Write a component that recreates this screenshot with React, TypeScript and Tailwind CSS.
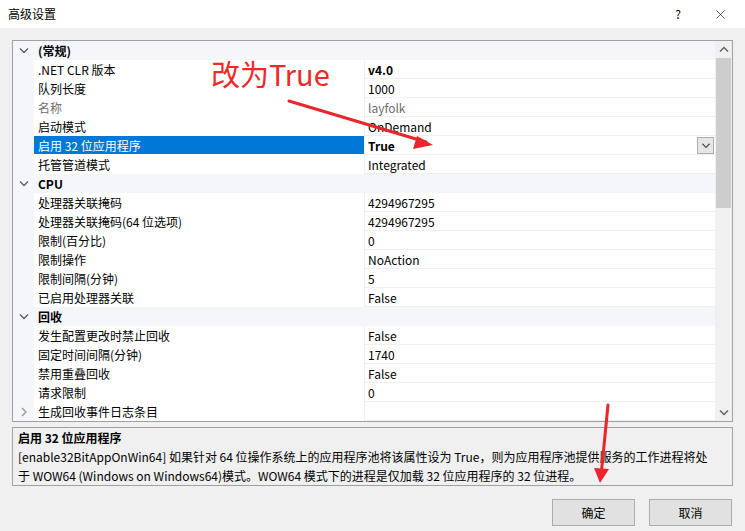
import { X } from 'lucide-react';

type Row =
  | { kind: 'cat'; label: string }
  | { kind: 'prop'; label: string; value: string; bold?: boolean; muted?: boolean; selected?: boolean; collapsed?: boolean };

const rows: Row[] = [
  { kind: 'cat', label: '(常规)' },
  { kind: 'prop', label: '.NET CLR 版本', value: 'v4.0', bold: true },
  { kind: 'prop', label: '队列长度', value: '1000' },
  { kind: 'prop', label: '名称', value: 'layfolk', muted: true },
  { kind: 'prop', label: '启动模式', value: 'OnDemand' },
  { kind: 'prop', label: '启用 32 位应用程序', value: 'True', bold: true, selected: true },
  { kind: 'prop', label: '托管管道模式', value: 'Integrated' },
  { kind: 'cat', label: 'CPU' },
  { kind: 'prop', label: '处理器关联掩码', value: '4294967295' },
  { kind: 'prop', label: '处理器关联掩码(64 位选项)', value: '4294967295' },
  { kind: 'prop', label: '限制(百分比)', value: '0' },
  { kind: 'prop', label: '限制操作', value: 'NoAction' },
  { kind: 'prop', label: '限制间隔(分钟)', value: '5' },
  { kind: 'prop', label: '已启用处理器关联', value: 'False' },
  { kind: 'cat', label: '回收' },
  { kind: 'prop', label: '发生配置更改时禁止回收', value: 'False' },
  { kind: 'prop', label: '固定时间间隔(分钟)', value: '1740' },
  { kind: 'prop', label: '禁用重叠回收', value: 'False' },
  { kind: 'prop', label: '请求限制', value: '0' },
  { kind: 'prop', label: '生成回收事件日志条目', value: '', collapsed: true },
];

const Chevron = ({ dir, className }: { dir: 'down' | 'right' | 'up'; className?: string }) => {
  const d = dir === 'down' ? 'M1 2.5 L5 6.5 L9 2.5' : dir === 'up' ? 'M1 6.5 L5 2.5 L9 6.5' : 'M3 1 L7 5 L3 9';
  return (
    <svg width="10" height="10" viewBox="0 0 10 10" className={className}>
      <path d={d} fill="none" stroke="currentColor" strokeWidth="1.4" />
    </svg>
  );
};

const App = () => {
  return (
    <div
      className="relative w-[745px] h-[531px] bg-[#f0f0f0] text-[12px] text-black overflow-hidden"
      style={{ fontFamily: '"Noto Sans CJK SC", "Noto Sans", sans-serif' }}
    >
      {/* title bar */}
      <div className="h-[28px] bg-white flex items-center pl-[8px]">
        <span className="flex-1 leading-none">高级设置</span>
        <span className="w-[14px] text-center leading-none mr-[28px]">?</span>
        <X className="mr-[17px]" size={15} strokeWidth={1} />
      </div>

      <div className="px-[12px] pt-[12px]">
        {/* property grid */}
        <div className="flex border border-[#a0a0a0] bg-white h-[382px]">
          <div className="flex-1 flex flex-col">
            {rows.map((r, i) =>
              r.kind === 'cat' ? (
                <div key={i} className="h-[19px] flex items-center bg-[#f4f6fa]">
                  <div className="w-[21px] flex justify-center text-[#606060]">
                    <Chevron dir="down" />
                  </div>
                  <span className="pl-[4px] pt-[1px] font-bold leading-[18px]">{r.label}</span>
                </div>
              ) : (
                <div key={i} className="h-[19px] flex">
                  <div className="w-[21px] bg-[#f4f6fa] flex items-center justify-center text-[#9a9a9a]">
                    {r.collapsed && <Chevron dir="right" />}
                  </div>
                  <div
                    className={`w-[330px] h-[18px] pl-[4px] pt-[1px] leading-[17px] whitespace-nowrap ${
                      r.selected ? 'bg-[#0078d7] text-white' : r.muted ? 'text-[#6d6d6d]' : ''
                    }`}
                  >
                    {r.label}
                  </div>
                  <div className="w-[1px] bg-[#f0f0f0]" />
                  <div className="flex-1 flex flex-col">
                    <div
                      className={`h-[18px] pl-[3px] pr-[1px] flex items-center ${
                        r.bold ? 'font-bold' : ''
                      } ${r.muted ? 'text-[#6d6d6d]' : ''}`}
                    >
                      <span className="flex-1 pt-[1px] leading-[17px]">{r.value}</span>
                      {r.selected && (
                        <div className="w-[17px] h-[17px] mt-[1px] border border-[#adadad] bg-[#e6e6e6] flex items-center justify-center text-[#505050]">
                          <Chevron dir="down" className="scale-90" />
                        </div>
                      )}
                    </div>
                    <div className="h-[1px] bg-[#eef0f4]" />
                  </div>
                </div>
              )
            )}
          </div>
          {/* scrollbar */}
          <div className="w-[17px] bg-[#f0f0f0] flex flex-col items-center">
            <div className="h-[17px] flex items-center justify-center text-[#606060]">
              <Chevron dir="up" />
            </div>
            <div className="w-[15px] h-[150px] bg-[#cdcdcd]" />
            <div className="flex-1" />
            <div className="h-[17px] flex items-center justify-center text-[#606060]">
              <Chevron dir="down" />
            </div>
          </div>
        </div>

        {/* description */}
        <div className="mt-[5px] h-[59px] border border-[#a0a0a0] pl-[5px] leading-[19px] whitespace-nowrap">
          <div className="font-bold">启用 32 位应用程序</div>
          <div>[enable32BitAppOnWin64] 如果针对 64 位操作系统上的应用程序池将该属性设为 True，则为应用程序池提供服务的工作进程将处</div>
          <div>于 WOW64 (Windows on Windows64)模式。WOW64 模式下的进程是仅加载 32 位应用程序的 32 位进程。</div>
        </div>

        {/* buttons */}
        <div className="mt-[13px] flex justify-end gap-[14px] pr-[1px]">
          <button className="w-[83px] h-[27px] border border-[#adadad] bg-[#e1e1e1]">确定</button>
          <button className="w-[83px] h-[27px] border border-[#adadad] bg-[#e1e1e1]">取消</button>
        </div>
      </div>

      {/* red annotations */}
      <div
        className="absolute left-[211px] top-[59px] text-[29px] leading-none text-[#ec2a2a]"
        style={{ fontFamily: '"Noto Sans CJK SC", sans-serif' }}
      >
        改为True
      </div>
      <svg className="absolute left-0 top-0 pointer-events-none" width="745" height="531">
        <g stroke="#e8262b" strokeWidth="3" fill="none" strokeLinecap="round">
          <path d="M289 101 L426 142" />
          <path d="M608 405 L601 476" />
        </g>
        <g fill="#e8262b">
          <path d="M433 145 L417 136 L413 149 Z" />
          <path d="M600 483 L594 468 L609 469 Z" />
        </g>
      </svg>
    </div>
  );
};

export default App;
